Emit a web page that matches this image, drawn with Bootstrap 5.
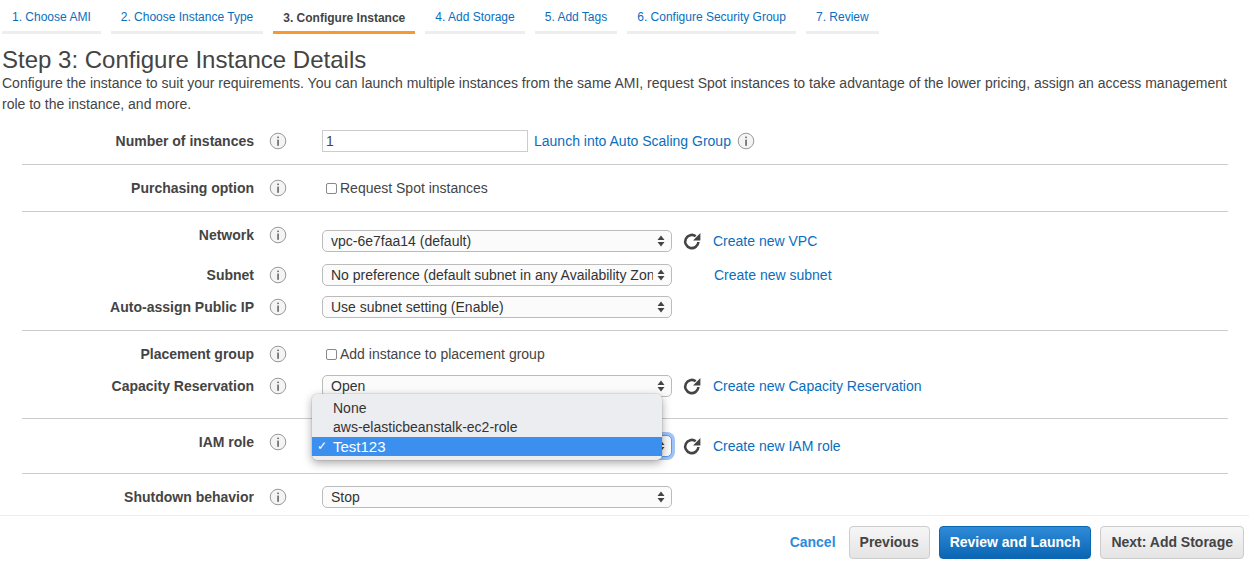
<!DOCTYPE html>
<html lang="en">
<head>
  <meta charset="UTF-8">
  <meta name="viewport" content="width=device-width, initial-scale=1.0">
  <title>Launch Instance Wizard</title>
  <link rel="stylesheet" href="https://cdn.jsdelivr.net/npm/bootstrap@5.3.0/dist/css/bootstrap.min.css">
  <style>
    html, body { height: 100%; }
    body {
      font-family: "Liberation Sans", Arial, sans-serif;
      font-size: 14px;
      color: #444;
      overflow: hidden;
    }
    a { text-decoration: none; color: #0a6ebd; }

    .wiz-tabs { padding-left: 2px; gap: 10px; height: 34px; }
    .wiz-tabs .nav-link {
      font-size: 12px;
      line-height: 14px;
      height: 34px;
      padding: 10px 10px 0;
      color: #0a6ebd;
      border-bottom: 3px solid #eee;
    }
    .wiz-tabs .nav-link.active {
      color: #444;
      font-weight: 700;
      padding-top: 11px;
      border-bottom-color: #f7992e;
    }

    .step-title { font-size: 24px; line-height: 27px; margin: 12px 0 0 2px; font-weight: 400; color: #444; }
    .step-desc { line-height: 21px; margin: 0 8px 15px 2px; color: #444; }

    .cfg-form { margin: 0 32px 0 22px; }
    .cfg-sect { border-bottom: 1px solid #ccc; padding: 12px 0; }
    .cfg-sect:first-child { padding-top: 0; }
    .cfg-sect:last-child { border-bottom: 0; }
    .sect-net { padding-top: 18px; }
    .sect-place { padding-bottom: 21px; }
    .sect-iam { padding: 16px 0; }
    .cfg-row { height: 22px; }
    .cfg-row + .cfg-row { margin-top: 10px; }
    .cfg-row.gap-wide + .cfg-row { margin-top: 12px; }

    .cfg-label { width: 232px; flex: none; text-align: right; font-weight: 700; color: #444; }
    .lift-6 { padding-bottom: 12px; }
    .lift-4 { padding-bottom: 8px; }
    .info-ico { width: 18px; height: 18px; flex: none; margin-left: 15px; }
    .info-after { margin-left: 6px; }
    .cfg-ctrl { width: 350px; flex: none; margin-left: 35px; position: relative; }
    .cfg-ctrl-num { margin-left: 35px; flex: none; }

    .cfg-num {
      width: 206px;
      height: 22px;
      min-height: 0;
      padding: 0 3px;
      font-size: 14px;
      color: #444;
      border: 1px solid #ccc;
      border-radius: 0;
    }
    .cfg-select {
      height: 22px;
      padding: 0 18px 0 8px;
      font-size: 14px;
      line-height: 20px;
      color: #333;
      background-color: #fbfbfb;
      background-image: url("data:image/svg+xml,%3Csvg xmlns='http://www.w3.org/2000/svg' width='8' height='12'%3E%3Cpath fill='%23444' d='M4 0.5 7.5 5H.5zM4 11.5.5 7h7z'/%3E%3C/svg%3E");
      background-position: right 6px center;
      background-size: 8px 12px;
      border: 1px solid #bbb;
      border-radius: 5px;
    }
    .cfg-select.is-open { border-color: #5a9ae8; box-shadow: 0 0 0 3px rgba(80, 150, 240, .55); }

    .cfg-check { margin-left: 4px; }
    .cfg-check .form-check-input {
      width: 11px;
      height: 11px;
      margin: 0 3px 0 0;
      border: 1px solid #888;
      border-radius: 2px;
    }
    .cfg-check .form-check-label { color: #444; }

    .refresh-ico { width: 20px; height: 20px; flex: none; margin-left: 10px; }
    .row-link { margin-left: 11px; }
    .no-ico { margin-left: 42px; }

    .role-menu {
      position: absolute;
      left: -10px;
      top: -41px;
      width: 350px;
      padding: 5px 0 4px;
      background: #ecedf0;
      border-radius: 5px;
      box-shadow: 0 3px 10px rgba(0, 0, 0, .35), 0 0 0 .5px rgba(0, 0, 0, .12);
      z-index: 5;
      color: #333;
      margin: 0;
    }
    .role-menu li { height: 19px; line-height: 19px; padding-left: 21px; position: relative; }
    .role-menu li.picked { background: #3a8fef; color: #fff; font-size: 15px; }
    .role-menu .tick { position: absolute; left: 5px; top: 0; font-size: 12px; }

    .wiz-foot {
      flex: none;
      height: 57px;
      width: 1249px;
      border-top: 1px solid #eee;
      background: #fff;
      padding: 10px 5px 0 0;
      gap: 9px;
    }
    .foot-cancel { color: #2e8bdb; font-weight: 700; margin-right: 4px; line-height: 33px; height: 33px; }
    .foot-btn {
      height: 33px;
      padding: 0 10px;
      font-size: 14px;
      font-weight: 700;
      line-height: 31px;
      color: #444;
      background: linear-gradient(#f6f6f6, #e4e4e4);
      border: 1px solid #ccc;
      border-radius: 4px;
    }
    .foot-btn.go {
      color: #fff;
      background: linear-gradient(#2f8ad8, #0a66b2);
      border-color: #0a66b2;
      padding: 0 10px;
    }
  </style>
</head>
<body class="d-flex flex-column">
  <svg width="0" height="0" class="position-absolute">
    <symbol id="i-info" viewBox="0 0 18 18">
      <circle cx="9" cy="9" r="7.8" fill="#f4f4f4" stroke="#999" stroke-width="1"/>
      <rect x="8.4" y="7.6" width="1.3" height="6.2" fill="#444"/>
      <rect x="8.4" y="4.6" width="1.3" height="1.5" fill="#444"/>
    </symbol>
    <symbol id="i-refresh" viewBox="0 0 20 20">
      <path d="M13.7 5.2A6.6 6.6 0 1 0 16.4 11" fill="none" stroke="#444" stroke-width="2.6"/>
      <path d="M18.4 2v7.4h-7.4z" fill="#444"/>
    </symbol>
  </svg>

  <div class="flex-grow-1 overflow-hidden">
    <ul class="nav wiz-tabs">
      <li class="nav-item"><a class="nav-link" href="#">1. Choose AMI</a></li>
      <li class="nav-item"><a class="nav-link" href="#">2. Choose Instance Type</a></li>
      <li class="nav-item"><a class="nav-link active" href="#">3. Configure Instance</a></li>
      <li class="nav-item"><a class="nav-link" href="#">4. Add Storage</a></li>
      <li class="nav-item"><a class="nav-link" href="#">5. Add Tags</a></li>
      <li class="nav-item"><a class="nav-link" href="#">6. Configure Security Group</a></li>
      <li class="nav-item"><a class="nav-link" href="#">7. Review</a></li>
    </ul>

    <h1 class="step-title">Step 3: Configure Instance Details</h1>
    <p class="step-desc">Configure the instance to suit your requirements. You can launch multiple instances from the same AMI, request Spot instances to take advantage of the lower pricing, assign an access management role to the instance, and more.</p>

    <form class="cfg-form">
      <div class="cfg-sect">
        <div class="cfg-row d-flex align-items-center">
          <div class="cfg-label">Number of instances</div>
          <svg class="info-ico"><use href="#i-info"/></svg>
          <div class="cfg-ctrl-num"><input type="text" class="form-control cfg-num" value="1"></div>
          <a href="#" class="ms-2 ps-0" style="margin-left:6px !important">Launch into Auto Scaling Group</a>
          <svg class="info-ico info-after"><use href="#i-info"/></svg>
        </div>
      </div>

      <div class="cfg-sect">
        <div class="cfg-row d-flex align-items-center">
          <div class="cfg-label">Purchasing option</div>
          <svg class="info-ico"><use href="#i-info"/></svg>
          <div class="cfg-ctrl">
            <div class="cfg-check d-flex align-items-center">
              <input class="form-check-input" type="checkbox" id="spot">
              <label class="form-check-label" for="spot">Request Spot instances</label>
            </div>
          </div>
        </div>
      </div>

      <div class="cfg-sect sect-net">
        <div class="cfg-row gap-wide d-flex align-items-center">
          <div class="cfg-label lift-6">Network</div>
          <svg class="info-ico lift-6" style="height:30px"><use href="#i-info" width="18" height="18"/></svg>
          <div class="cfg-ctrl">
            <select class="form-select cfg-select"><option>vpc-6e7faa14 (default)</option></select>
          </div>
          <svg class="refresh-ico"><use href="#i-refresh"/></svg>
          <a href="#" class="row-link">Create new VPC</a>
        </div>
        <div class="cfg-row d-flex align-items-center">
          <div class="cfg-label">Subnet</div>
          <svg class="info-ico"><use href="#i-info"/></svg>
          <div class="cfg-ctrl">
            <select class="form-select cfg-select"><option>No preference (default subnet in any Availability Zone)</option></select>
          </div>
          <a href="#" class="no-ico">Create new subnet</a>
        </div>
        <div class="cfg-row d-flex align-items-center">
          <div class="cfg-label">Auto-assign Public IP</div>
          <svg class="info-ico"><use href="#i-info"/></svg>
          <div class="cfg-ctrl">
            <select class="form-select cfg-select"><option>Use subnet setting (Enable)</option></select>
          </div>
        </div>
      </div>

      <div class="cfg-sect sect-place">
        <div class="cfg-row d-flex align-items-center">
          <div class="cfg-label">Placement group</div>
          <svg class="info-ico"><use href="#i-info"/></svg>
          <div class="cfg-ctrl">
            <div class="cfg-check d-flex align-items-center">
              <input class="form-check-input" type="checkbox" id="placement">
              <label class="form-check-label" for="placement">Add instance to placement group</label>
            </div>
          </div>
        </div>
        <div class="cfg-row d-flex align-items-center">
          <div class="cfg-label">Capacity Reservation</div>
          <svg class="info-ico"><use href="#i-info"/></svg>
          <div class="cfg-ctrl">
            <select class="form-select cfg-select"><option>Open</option></select>
          </div>
          <svg class="refresh-ico"><use href="#i-refresh"/></svg>
          <a href="#" class="row-link">Create new Capacity Reservation</a>
        </div>
      </div>

      <div class="cfg-sect sect-iam">
        <div class="cfg-row d-flex align-items-center">
          <div class="cfg-label lift-4">IAM role</div>
          <svg class="info-ico" style="height:26px;padding-bottom:8px"><use href="#i-info" width="18" height="18"/></svg>
          <div class="cfg-ctrl">
            <select class="form-select cfg-select is-open"><option>Test123</option></select>
            <ul class="role-menu list-unstyled">
              <li>None</li>
              <li>aws-elasticbeanstalk-ec2-role</li>
              <li class="picked"><span class="tick">&#10003;</span>Test123</li>
            </ul>
          </div>
          <svg class="refresh-ico"><use href="#i-refresh"/></svg>
          <a href="#" class="row-link">Create new IAM role</a>
        </div>
      </div>

      <div class="cfg-sect">
        <div class="cfg-row d-flex align-items-center">
          <div class="cfg-label">Shutdown behavior</div>
          <svg class="info-ico"><use href="#i-info"/></svg>
          <div class="cfg-ctrl">
            <select class="form-select cfg-select"><option>Stop</option></select>
          </div>
        </div>
      </div>
    </form>
  </div>

  <div class="wiz-foot d-flex justify-content-end align-items-start">
    <a href="#" class="foot-cancel">Cancel</a>
    <button type="button" class="btn foot-btn">Previous</button>
    <button type="button" class="btn foot-btn go">Review and Launch</button>
    <button type="button" class="btn foot-btn">Next: Add Storage</button>
  </div>

  <script src="https://cdn.jsdelivr.net/npm/bootstrap@5.3.0/dist/js/bootstrap.bundle.min.js"></script>
</body>
</html>
